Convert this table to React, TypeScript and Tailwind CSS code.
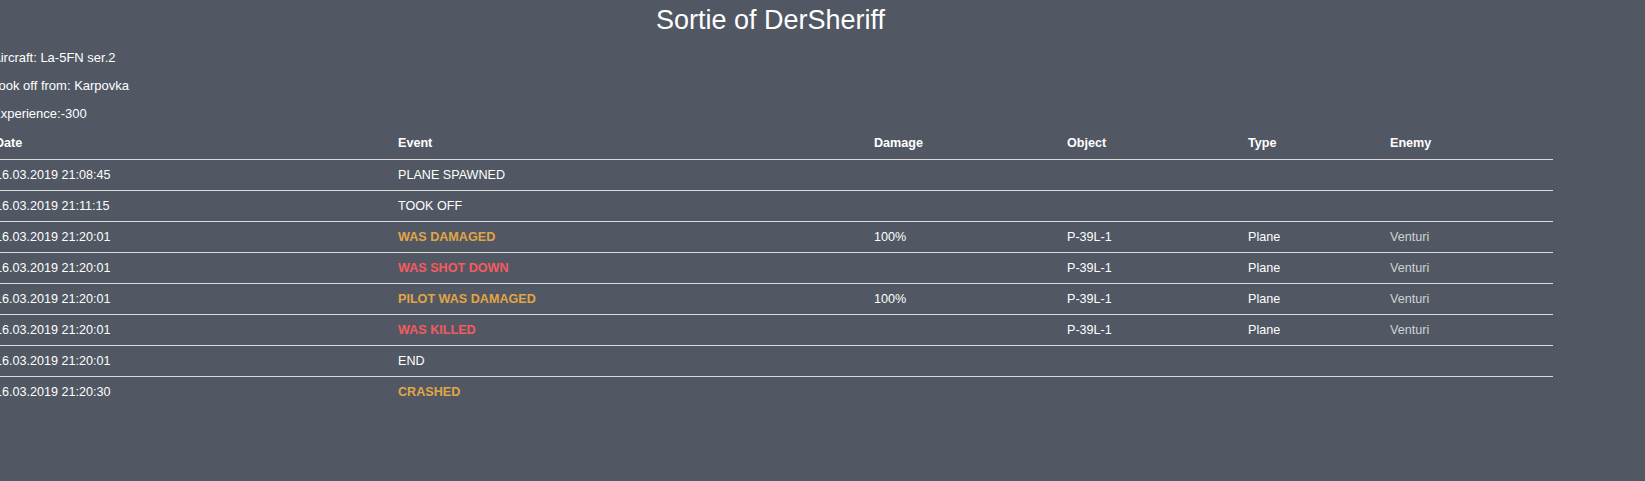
import React from 'react';

type SortieEvent = {
  date: string;
  event: string;
  tone?: 'warn' | 'bad';
  damage?: string;
  object?: string;
  type?: string;
  enemy?: string;
};

const events: SortieEvent[] = [
  { date: '16.03.2019 21:08:45', event: 'PLANE SPAWNED' },
  { date: '16.03.2019 21:11:15', event: 'TOOK OFF' },
  { date: '16.03.2019 21:20:01', event: 'WAS DAMAGED', tone: 'warn', damage: '100%', object: 'P-39L-1', type: 'Plane', enemy: 'Venturi' },
  { date: '16.03.2019 21:20:01', event: 'WAS SHOT DOWN', tone: 'bad', object: 'P-39L-1', type: 'Plane', enemy: 'Venturi' },
  { date: '16.03.2019 21:20:01', event: 'PILOT WAS DAMAGED', tone: 'warn', damage: '100%', object: 'P-39L-1', type: 'Plane', enemy: 'Venturi' },
  { date: '16.03.2019 21:20:01', event: 'WAS KILLED', tone: 'bad', object: 'P-39L-1', type: 'Plane', enemy: 'Venturi' },
  { date: '16.03.2019 21:20:01', event: 'END' },
  { date: '16.03.2019 21:20:30', event: 'CRASHED', tone: 'warn' },
];

const cols = 'grid grid-cols-[403px_476px_193px_181px_142px_170px]';

const App = () => {
  return (
    <div className="min-h-[481px] bg-[#515863] text-white text-[12.6px] font-['Liberation_Sans',Arial,sans-serif] overflow-hidden">
      <div className="ml-[-12px] w-[1565px]">
        <div className="h-[44px] text-center">
          <h1 className="text-[27px] leading-[40px] font-normal">Sortie of DerSheriff</h1>
        </div>

        <div className="pl-[4px] text-[13px]">
          <div className="h-[28px] flex items-center">Aircraft: La-5FN ser.2</div>
          <div className="h-[28px] flex items-center">Took off from: Karpovka</div>
          <div className="h-[28px] flex items-center">Experience:-300</div>
        </div>

        <div className={`${cols} h-[31px] font-bold`}>
          {['Date', 'Event', 'Damage', 'Object', 'Type', 'Enemy'].map((label) => (
            <div key={label} className="px-[7px] flex items-center">{label}</div>
          ))}
        </div>

        {events.map((row, index) => {
          const eventClass =
            row.tone === 'warn'
              ? 'text-[#e2a545] font-bold'
              : row.tone === 'bad'
                ? 'text-[#f65a5f] font-bold'
                : '';
          return (
            <div key={index} className={`${cols} h-[31px] border-t border-[#dcdcdc]`}>
              <div className="px-[7px] flex items-center">{row.date}</div>
              <div className={`px-[7px] flex items-center ${eventClass}`}>{row.event}</div>
              <div className="px-[7px] flex items-center">{row.damage}</div>
              <div className="px-[7px] flex items-center">{row.object}</div>
              <div className="px-[7px] flex items-center">{row.type}</div>
              <div className="px-[7px] flex items-center text-[#cfd2d6]">{row.enemy}</div>
            </div>
          );
        })}
      </div>
    </div>
  );
};

export default App;
